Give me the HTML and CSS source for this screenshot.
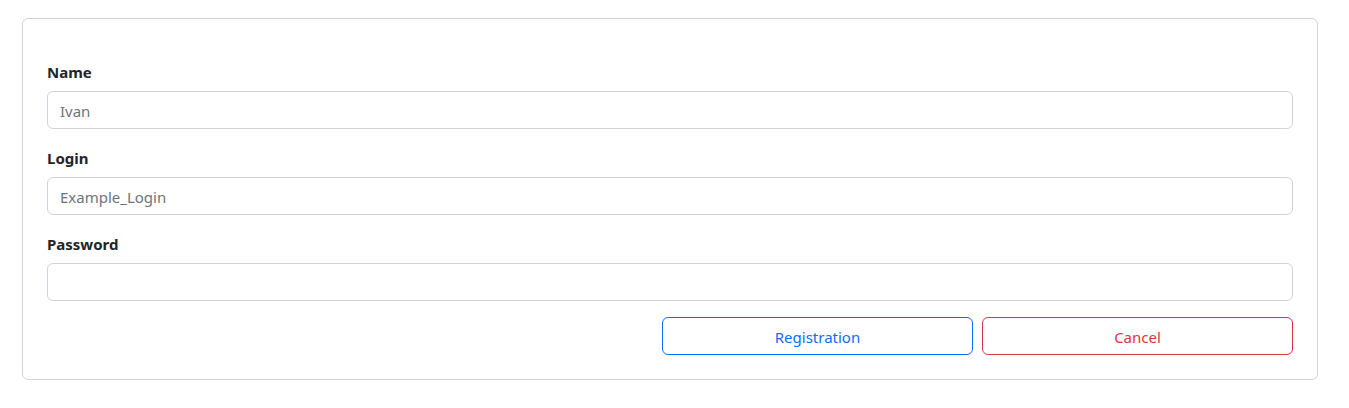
FILE: index.html
```html
<!DOCTYPE html>
<html lang="en">
<head>
<meta charset="utf-8">
<title>Registration</title>
<link rel="stylesheet" href="styles.css">
</head>
<body>
<div class="card">
  <form class="form">
    <div class="group">
      <label class="label" for="name">Name</label>
      <input class="input" id="name" type="text" placeholder="Ivan">
    </div>
    <div class="group">
      <label class="label" for="login">Login</label>
      <input class="input" id="login" type="text" placeholder="Example_Login">
    </div>
    <div class="group">
      <label class="label" for="password">Password</label>
      <input class="input" id="password" type="password">
    </div>
    <div class="actions">
      <button type="button" class="btn btn-blue">Registration</button>
      <button type="button" class="btn btn-red">Cancel</button>
    </div>
  </form>
</div>
</body>
</html>
```
FILE: styles.css
```css
* { box-sizing: border-box; }
html, body { margin: 0; padding: 0; background: #fff; }
body {
  font-family: "Noto Sans", "Open Sans", sans-serif;
  font-size: 16px;
  line-height: 1.5;
  color: #212529;
  padding: 18px 31px 0 22px;
}
.card {
  border: 1px solid #d3d4d5;
  border-radius: 6px;
  padding: 40px 24px 24px;
  height: 362px;
}
.form { display: flex; flex-direction: column; }
.group { display: flex; flex-direction: column; margin-bottom: 16px; }
.label {
  font-weight: 700;
  font-size: 15px;
  line-height: 22px;
  padding-top: 2px;
  margin-bottom: 8px;
}
.input {
  height: 38px;
  border: 1px solid #ced4da;
  border-radius: 6px;
  padding: 2px 12px 0;
  font-family: inherit;
  font-size: 15px;
  color: #212529;
  background: #fff;
  outline: none;
}
.input::placeholder { color: #6c757d; }
.actions { display: flex; justify-content: flex-end; gap: 9px; }
.btn {
  width: 311px;
  height: 38px;
  border-radius: 6px;
  background: #fff;
  font-family: inherit;
  font-size: 15px;
  padding: 2px 12px 0;
  cursor: pointer;
}
.btn-blue { border: 1px solid #0d6efd; color: #0d6efd; }
.btn-red { border: 1px solid #dc3545; color: #dc3545; }
```
